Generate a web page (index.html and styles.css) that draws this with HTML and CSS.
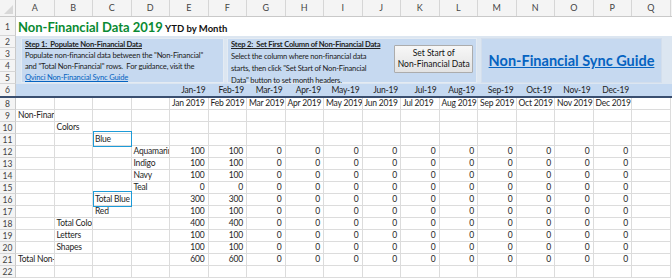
FILE: index.html
```html
<!DOCTYPE html>
<html lang="en">
<head>
  <meta charset="UTF-8" />
  <title>Non-Financial Data 2019</title>
  <link rel="stylesheet" href="styles.css">
</head>
<body>

<div class="sheet">
  <!-- COLUMN HEADERS -->
  <div class="row head-row" id="headRow">
    <div class="corner"></div>
  </div>

  <!-- ROW 1: TITLE -->
  <div class="title-row">
    <div class="rh">1</div>
    <div class="title">
      <span class="title-main">Non-Financial Data 2019</span>
      <span class="title-sub">YTD by Month</span>
    </div>
  </div>

  <!-- ROWS 2-5: INSTRUCTIONS BAND -->
  <div class="band-row">
    <div class="rh-stack">
      <div class="rh">2</div>
      <div class="rh">3</div>
      <div class="rh">4</div>
      <div class="rh">5</div>
    </div>
    <div class="band">
      <div class="box step1">
        <div class="step-title">Step 1:&nbsp; Populate Non-Financial Data</div>
        <div>Populate non-financial data between the "Non-Financial"</div>
        <div>and "Total Non-Financial" rows.&nbsp; For guidance, visit the</div>
        <div><a class="link">Qvinci Non-Financial Sync Guide</a></div>
      </div>
      <div class="box step2">
        <div class="step2-text">
          <div class="step-title">Step 2:&nbsp; Set First Column of Non-Financial Data</div>
          <div>Select the column where non-financial data</div>
          <div>starts, then click "Set Start of Non-Financial</div>
          <div>Data" button to set month headers.</div>
        </div>
        <button class="set-btn">Set Start of<br/>Non-Financial Data</button>
      </div>
      <div class="box guide">
        <a class="guide-link">Non-Financial Sync Guide</a>
      </div>
    </div>
  </div>

  <!-- ROW 6 AND DATA ROWS -->
  <div id="rows"></div>
</div>

<script>
  const letters = 'ABCDEFGHIJKLMNOPQ'.split('');
  const months = ['Jan','Feb','Mar','Apr','May','Jun','Jul','Aug','Sep','Oct','Nov','Dec'];

  const data = [
    { n: 9,  col: 0, label: 'Non-Financial' },
    { n: 10, col: 1, label: 'Colors' },
    { n: 11, col: 2, label: 'Blue', mark: true },
    { n: 12, col: 3, label: 'Aquamarine', v: 100 },
    { n: 13, col: 3, label: 'Indigo', v: 100 },
    { n: 14, col: 3, label: 'Navy', v: 100 },
    { n: 15, col: 3, label: 'Teal', v: 0 },
    { n: 16, col: 2, label: 'Total Blue', v: 300, mark: true },
    { n: 17, col: 2, label: 'Red', v: 100 },
    { n: 18, col: 1, label: 'Total Colors', v: 400 },
    { n: 19, col: 1, label: 'Letters', v: 100 },
    { n: 20, col: 1, label: 'Shapes', v: 100 },
    { n: 21, col: 0, label: 'Total Non-Financial', v: 600 },
    { n: 22 }
  ];

  const head = document.getElementById('headRow');
  letters.forEach(l => { head.innerHTML += `<div class="ch">${l}</div>`; });

  const rows = document.getElementById('rows');
  let html = '';

  // row 6: month headers
  html += '<div class="row month-row"><div class="rh">6</div>';
  letters.forEach((l, i) => {
    const m = i >= 4 && i < 16 ? months[i - 4] + '-19' : '';
    html += `<div class="cell num">${m}</div>`;
  });
  html += '</div>';

  // row 8: month names
  html += '<div class="row"><div class="rh">8</div>';
  letters.forEach((l, i) => {
    const m = i >= 4 && i < 16 ? months[i - 4] + ' 2019' : '';
    html += `<div class="cell">${m}</div>`;
  });
  html += '</div>';

  data.forEach(r => {
    html += `<div class="row"><div class="rh">${r.n}</div>`;
    letters.forEach((l, i) => {
      if (i === r.col) {
        html += `<div class="cell label${r.mark ? ' marked' : ''}">${r.label}</div>`;
      } else if (r.v !== undefined && i >= 4 && i < 16) {
        html += `<div class="cell num">${i < 6 ? r.v : 0}</div>`;
      } else {
        html += '<div class="cell"></div>';
      }
    });
    html += '</div>';
  });

  rows.innerHTML = html;
</script>

</body>
</html>
```

FILE: styles.css
```css
* { box-sizing: border-box; }
body, html {
  margin: 0; padding: 0;
  font-family: 'Lato', 'Open Sans', sans-serif;
  font-size: 8.5px;
  color: #1e1e1e;
  background: #fff;
  overflow: hidden;
}
.sheet { width: 672px; }
.row {
  display: grid;
  grid-template-columns: 16px repeat(17, 38.5px);
  height: 12px;
}
.head-row { height: 17px; background: #f4f4f4; border-bottom: 1px solid #c9c9c9; }
.corner { position: relative; border-right: 1px solid #c9c9c9; }
.corner::after {
  content: ''; position: absolute; right: 2px; bottom: 2px;
  border-left: 9px solid transparent; border-bottom: 9px solid #d8d8d8;
}
.ch {
  text-align: center; line-height: 16px; color: #444; font-size: 9px;
  border-right: 1px solid #d6d6d6;
}
.rh {
  background: #f4f4f4; color: #444; text-align: center;
  border-right: 1px solid #c9c9c9; border-bottom: 1px solid #d6d6d6;
  height: 12px; line-height: 12px; font-size: 8.5px;
}
.cell {
  border-right: 1px solid #dcdcdc; border-bottom: 1px solid #dcdcdc;
  line-height: 11px; padding: 0 2px; white-space: nowrap; overflow: hidden;
  letter-spacing: -0.2px;
}
.num { text-align: right; padding-right: 3px; }
.marked { position: relative; overflow: visible; }
.marked::after {
  content: ''; position: absolute; left: 0; right: -1px; top: -3px; bottom: -2px;
  border: 1px solid #1d9bd8;
}

/* title row */
.title-row { display: flex; height: 19px; }
.title-row .rh { width: 16px; height: 19px; line-height: 21px; }
.title { padding: 0 2px; white-space: nowrap; line-height: 20px; }
.title-main { font-size: 13px; font-weight: bold; color: #0a8a32; }
.title-sub { font-size: 9.5px; font-weight: bold; color: #111; }

/* instructions band */
.band-row { display: flex; height: 48px; }
.rh-stack { width: 16px; }
.band {
  flex: 1; display: flex; gap: 3px;
  background: #dce6f1; padding: 2px 10px 0 5px;
}
.box {
  background: #c6d9f0; border: 1px solid #e4ebf3;
  height: 45px; font-size: 7.6px; line-height: 12px; color: #222;
  letter-spacing: -0.2px; white-space: nowrap;
}
.box > div, .step2-text { margin-top: -1px; }
.step1 { width: 203px; padding: 0 3px; }
.step2 { width: 250px; display: flex; padding: 0 3px; }
.step2-text { width: 160px; }
.step-title { font-weight: bold; text-decoration: underline; }
.link { color: #0563c1; text-decoration: underline; }
.set-btn {
  margin: 6px 0 0 4px; width: 79px; height: 28px; padding: 0;
  font-family: inherit; font-size: 8.5px; line-height: 11px; color: #111;
  background: linear-gradient(#f7f7f7, #e3e3e3);
  border: 1px solid #acacac; border-radius: 1px;
}
.guide {
  margin-left: 1px; flex: 1;
  display: flex; align-items: center; justify-content: center;
  border-color: #d3deec;
}
.guide-link {
  color: #0563c1; text-decoration: underline; font-weight: bold; font-size: 14.5px;
  letter-spacing: 0;
}

/* month header row */
.month-row { background: #c5d9f1; border-bottom: 2px solid #3a4f70; height: 14px; }
.month-row .cell { border: none; line-height: 12px; }
.month-row .rh { border-bottom: none; }
```
